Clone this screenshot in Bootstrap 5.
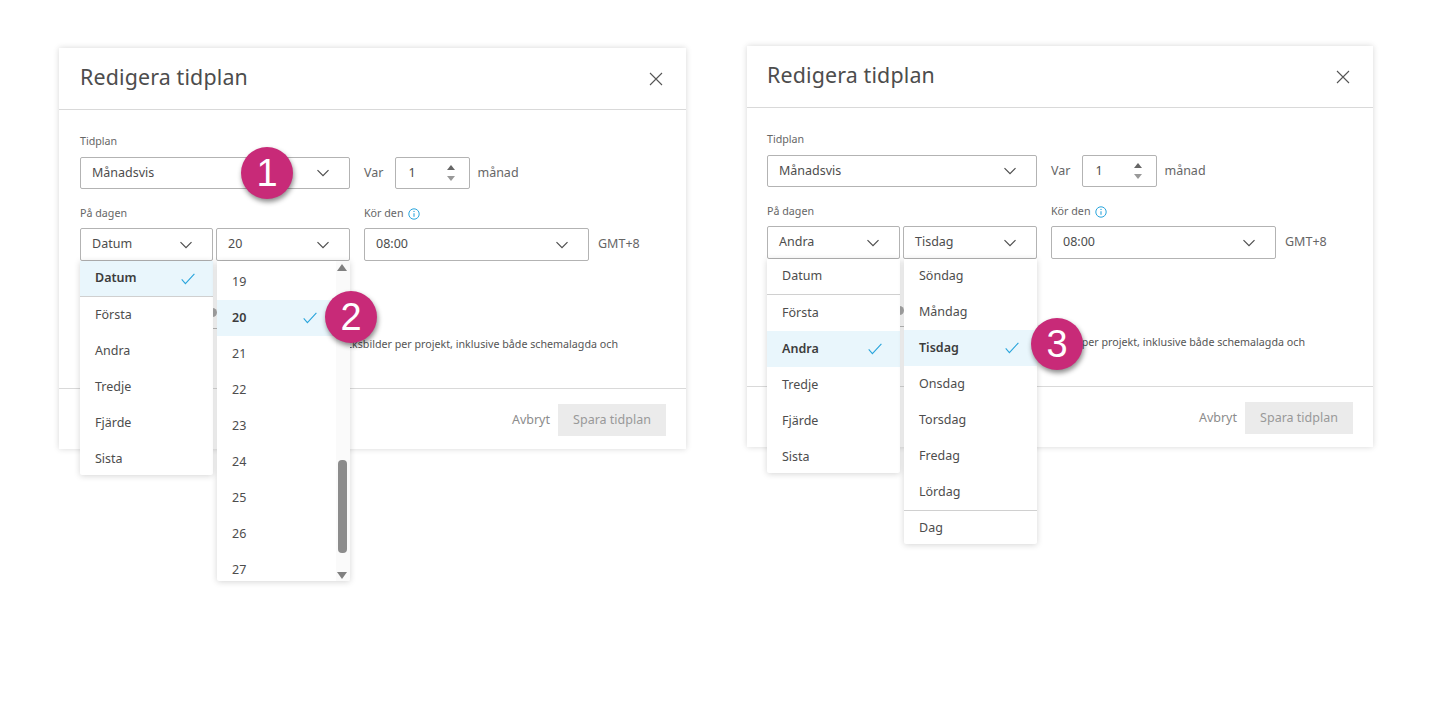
<!DOCTYPE html>
<html lang="sv">
<head>
<meta charset="utf-8">
<title>Redigera tidplan</title>
<link href="https://cdn.jsdelivr.net/npm/bootstrap@5.3.0/dist/css/bootstrap.min.css" rel="stylesheet">
<style>
body{background:#fff;font-family:"Noto Sans","Liberation Sans",sans-serif;color:#4d4d4d;font-size:12.5px}
.stage{padding:48px 62px 0 59px;gap:61px;align-items:flex-start}
.dlg{width:627px;height:401px;background:#fff;box-shadow:0 0 6px rgba(0,0,0,.16);position:relative}
.dlg-b{margin-top:-2px;width:626px}
.dlg-head{height:62px;border-bottom:1px solid #d9d9d9;padding:0 23px 4px 21px;align-items:center;justify-content:space-between}
.dlg-title{font-size:21.4px;color:#4d4d4d;font-weight:400;margin:0;letter-spacing:.15px}
.dlg-body{padding:24px 21px 0;height:278px}
.dlg-b .dlg-head,.dlg-b .dlg-body{padding-left:20px}
.lbl{font-size:10.7px;color:#666;line-height:14px;display:block;margin-bottom:9px}
.lbl-b{margin-bottom:8px}
.lbl svg{margin-left:2px}
.sel{height:33px;border:1px solid #b3b3b3;border-radius:2px;padding:0 19px 0 11px;align-items:center;justify-content:space-between;background:#fff;color:#4d4d4d;flex:none}
.sel svg{flex:none}
.w270{width:270px}.w133{width:133px}.w134{width:134px}.w225{width:225px}
.w75{width:75px;padding-right:14px;padding-left:12px}
.slot{position:relative}
.row1{height:32px;margin-bottom:17px}
.row1 .sel{height:32px}
.txt{color:#666}
.var{margin:0 12px 0 14px}
.after{margin-left:7px}
.after-gmt{margin-left:9px}
.gap-sel{gap:3px}
.col-run{margin-left:14px}
.spin{display:flex;flex-direction:column;gap:6px}
.spin i{display:block;width:0;height:0;border-left:4.5px solid transparent;border-right:4.5px solid transparent}
.spin .u{border-bottom:5px solid #666}
.spin .d{border-top:5px solid #999}
.menu{position:absolute;left:0;top:33px;z-index:2;background:#fff;box-shadow:0 1px 6px rgba(0,0,0,.17);border-radius:0 0 2px 2px;overflow:hidden;width:133px}
.opt{height:36px;padding:0 18px 0 15px;align-items:center;justify-content:space-between;color:#4d4d4d}
.opt.first{height:35px;border-bottom:1px solid #d0d0d0;box-sizing:content-box}
.opt.first span{margin-bottom:1px}
.opt.pick{background:#e9f6fc;font-weight:600;color:#3c3c3c}
.opt.sep{border-top:1px solid #d0d0d0;height:36px}
.m1{height:214px}
.m2{left:1px;height:320px;padding-top:3px}
.m3{left:1px;height:285px}
.m3 .opt:first-child{margin-top:-1px}
.track{position:absolute;right:0;top:0;bottom:0;width:14px;background:#fafafa}
.thumb{position:absolute;left:2px;top:199px;width:9px;height:93px;border-radius:4px;background:#8c8c8c}
.ar{position:absolute;left:1px;width:0;height:0;border-left:5px solid transparent;border-right:5px solid transparent}
.ar.t{top:3px;border-bottom:7px solid #808080}
.ar.b{bottom:2px;border-top:7px solid #808080}
.pad{padding-right:33px}
.field{margin-top:41px;width:137px;height:27px;position:relative;border-bottom:1px solid #bbb}
.clr{position:absolute;right:0;top:6px;width:9px;height:9px;border-radius:50%;background:#a9a9a9}
.note{margin:7px 0 0;width:538px;font-size:10.7px;color:#555;line-height:17px;white-space:nowrap;text-align:right}
.dlg-foot{height:61px;border-top:1px solid #d9d9d9;padding:15px 20px 0 0;justify-content:flex-end;align-items:flex-start;gap:8px}
.cancel{color:#8c8c8c;line-height:32px}
.save{--bs-btn-disabled-bg:#ebebeb;--bs-btn-disabled-color:#999;--bs-btn-disabled-border-color:#ebebeb;--bs-btn-disabled-opacity:1;--bs-btn-font-size:12.5px;--bs-btn-border-radius:0;height:32px;width:108px;padding:0}
.pin{position:absolute;z-index:5;width:52px;height:52px;border-radius:50%;background:#c82a78;color:#fff;font-family:"Liberation Sans",sans-serif;font-size:38px;line-height:52px;text-align:center;box-shadow:1px 3px 5px rgba(0,0,0,.45)}
.p1{left:182px;top:99px}
.p2{left:266px;top:243px}
.p3{left:284px;top:272px}
.close-x{margin-top:4px}
</style>
</head>
<body class="min-vh-100">
<svg width="0" height="0" class="position-absolute">
  <defs>
    <symbol id="chev" viewBox="0 0 14 14"><path d="M1.5 4.2 7 9.7l5.5-5.5" fill="none" stroke="currentColor" stroke-width="1.2"/></symbol>
    <symbol id="tick" viewBox="0 0 14 12"><path d="M.7 6.4 4.4 10.6 13.4.8" fill="none" stroke="#2aa5dc" stroke-width="1.1"/></symbol>
    <symbol id="cross" viewBox="0 0 14 14"><path d="M1 1l12 12M13 1 1 13" fill="none" stroke="#555" stroke-width="1.1"/></symbol>
    <symbol id="info" viewBox="0 0 12 12"><circle cx="6" cy="6" r="5.2" fill="none" stroke="#2aa5dc" stroke-width="1"/><path d="M6 5.2v3.6" stroke="#2aa5dc" stroke-width="1.1"/><circle cx="6" cy="3.4" r=".7" fill="#2aa5dc"/></symbol>
  </defs>
</svg>
<main class="stage d-flex min-vh-100">

  <section class="dlg">
    <header class="dlg-head d-flex">
      <h1 class="dlg-title">Redigera tidplan</h1>
      <svg class="close-x" width="14" height="14"><use href="#cross"/></svg>
    </header>
    <div class="dlg-body">
      <label class="lbl">Tidplan</label>
      <div class="row1 d-flex align-items-center">
        <div class="sel w270 d-flex"><span>Månadsvis</span><svg width="14" height="14"><use href="#chev"/></svg></div>
        <span class="txt var">Var</span>
        <div class="sel w75 d-flex"><span>1</span><span class="spin"><i class="u"></i><i class="d"></i></span></div>
        <span class="txt after">månad</span>
      </div>
      <div class="d-flex">
        <div>
          <label class="lbl lbl-b">På dagen</label>
          <div class="d-flex gap-sel">
            <div class="slot">
              <div class="sel w133 d-flex"><span>Datum</span><svg width="14" height="14"><use href="#chev"/></svg></div>
              <div class="menu m1">
                <div class="opt first pick d-flex"><span>Datum</span><svg width="14" height="12"><use href="#tick"/></svg></div>
                <div class="opt d-flex">Första</div>
                <div class="opt d-flex">Andra</div>
                <div class="opt d-flex">Tredje</div>
                <div class="opt d-flex">Fjärde</div>
                <div class="opt d-flex">Sista</div>
              </div>
            </div>
            <div class="slot">
              <div class="sel w134 d-flex"><span>20</span><svg width="14" height="14"><use href="#chev"/></svg></div>
              <div class="menu m2">
                <div class="opt pad d-flex"><span>19</span></div>
                <div class="opt pad pick d-flex"><span>20</span><svg width="14" height="12"><use href="#tick"/></svg></div>
                <div class="opt pad d-flex">21</div>
                <div class="opt pad d-flex">22</div>
                <div class="opt pad d-flex">23</div>
                <div class="opt pad d-flex">24</div>
                <div class="opt pad d-flex">25</div>
                <div class="opt pad d-flex">26</div>
                <div class="opt pad d-flex">27</div>
                <div class="track"><span class="ar t"></span><span class="thumb"></span><span class="ar b"></span></div>
              </div>
            </div>
          </div>
        </div>
        <div class="col-run">
          <label class="lbl lbl-b">Kör den <svg width="12" height="12"><use href="#info"/></svg></label>
          <div class="d-flex align-items-center">
            <div class="sel w225 d-flex"><span>08:00</span><svg width="14" height="14"><use href="#chev"/></svg></div>
            <span class="txt after-gmt">GMT+8</span>
          </div>
        </div>
      </div>
      <div class="field"><span class="clr"></span></div>
      <p class="note">Högst 10 ögonblicksbilder per projekt, inklusive både schemalagda och</p>
    </div>
    <footer class="dlg-foot d-flex">
      <span class="cancel">Avbryt</span>
      <button class="save btn" disabled>Spara tidplan</button>
    </footer>
    <span class="pin p1">1</span>
    <span class="pin p2">2</span>
  </section>

  <section class="dlg dlg-b">
    <header class="dlg-head d-flex">
      <h1 class="dlg-title">Redigera tidplan</h1>
      <svg class="close-x" width="14" height="14"><use href="#cross"/></svg>
    </header>
    <div class="dlg-body">
      <label class="lbl">Tidplan</label>
      <div class="row1 d-flex align-items-center">
        <div class="sel w270 d-flex"><span>Månadsvis</span><svg width="14" height="14"><use href="#chev"/></svg></div>
        <span class="txt var">Var</span>
        <div class="sel w75 d-flex"><span>1</span><span class="spin"><i class="u"></i><i class="d"></i></span></div>
        <span class="txt after">månad</span>
      </div>
      <div class="d-flex">
        <div>
          <label class="lbl lbl-b">På dagen</label>
          <div class="d-flex gap-sel">
            <div class="slot">
              <div class="sel w133 d-flex"><span>Andra</span><svg width="14" height="14"><use href="#chev"/></svg></div>
              <div class="menu m1">
                <div class="opt first d-flex"><span>Datum</span></div>
                <div class="opt d-flex">Första</div>
                <div class="opt pick d-flex"><span>Andra</span><svg width="14" height="12"><use href="#tick"/></svg></div>
                <div class="opt d-flex">Tredje</div>
                <div class="opt d-flex">Fjärde</div>
                <div class="opt d-flex">Sista</div>
              </div>
            </div>
            <div class="slot">
              <div class="sel w134 d-flex"><span>Tisdag</span><svg width="14" height="14"><use href="#chev"/></svg></div>
              <div class="menu m3">
                <div class="opt d-flex">Söndag</div>
                <div class="opt d-flex">Måndag</div>
                <div class="opt pick d-flex"><span>Tisdag</span><svg width="14" height="12"><use href="#tick"/></svg></div>
                <div class="opt d-flex">Onsdag</div>
                <div class="opt d-flex">Torsdag</div>
                <div class="opt d-flex">Fredag</div>
                <div class="opt d-flex">Lördag</div>
                <div class="opt sep d-flex">Dag</div>
              </div>
            </div>
          </div>
        </div>
        <div class="col-run">
          <label class="lbl lbl-b">Kör den <svg width="12" height="12"><use href="#info"/></svg></label>
          <div class="d-flex align-items-center">
            <div class="sel w225 d-flex"><span>08:00</span><svg width="14" height="14"><use href="#chev"/></svg></div>
            <span class="txt after-gmt">GMT+8</span>
          </div>
        </div>
      </div>
      <div class="field"><span class="clr"></span></div>
      <p class="note">Högst 10 ögonblicksbilder per projekt, inklusive både schemalagda och</p>
    </div>
    <footer class="dlg-foot d-flex">
      <span class="cancel">Avbryt</span>
      <button class="save btn" disabled>Spara tidplan</button>
    </footer>
    <span class="pin p3">3</span>
  </section>

</main>
<script src="https://cdn.jsdelivr.net/npm/bootstrap@5.3.0/dist/js/bootstrap.bundle.min.js"></script>
</body>
</html>
